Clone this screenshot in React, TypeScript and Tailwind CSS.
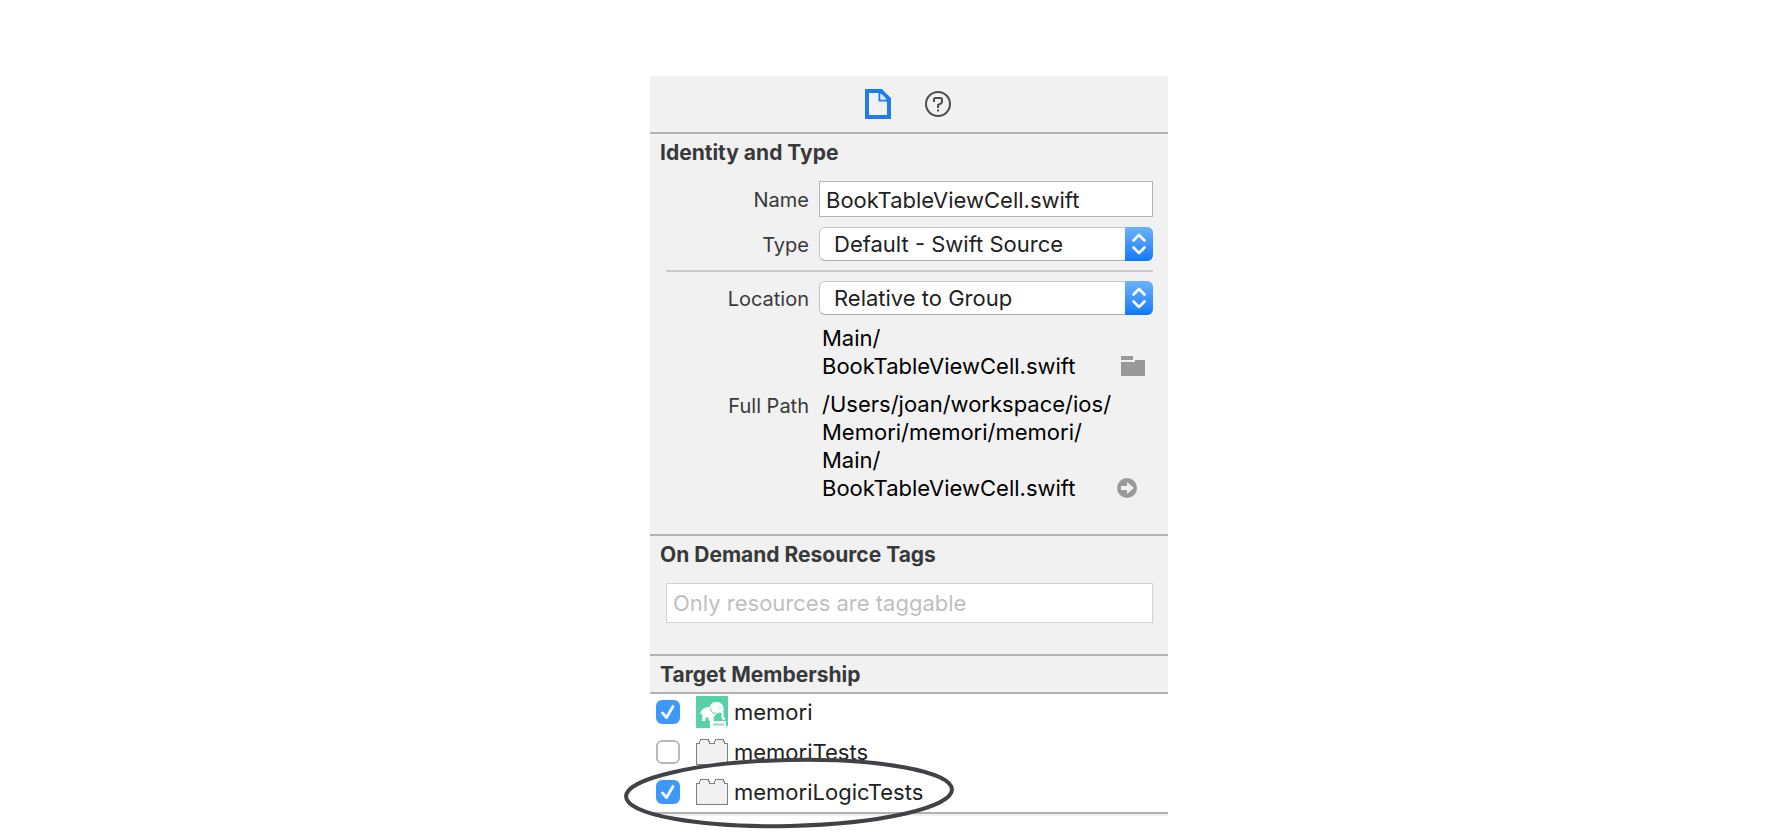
import { ReactNode, useState } from "react";

interface ITarget {
    id: string;
    title: string;
    kind: "app" | "bundle";
    checked: boolean;
}

const TARGETS: ITarget[] = [
    { id: "memori", title: "memori", kind: "app", checked: true },
    { id: "memori-tests", title: "memoriTests", kind: "bundle", checked: false },
    { id: "memori-logic-tests", title: "memoriLogicTests", kind: "bundle", checked: true },
];

const FileIcon = () => (
    <svg width="26" height="30" viewBox="0 0 26 30" fill="none">
        <path d="M2 2H16L24 10V28H2Z" stroke="#1f7ceb" strokeWidth="4" />
        <path d="M14.5 4V11.5H22" stroke="#1f7ceb" strokeWidth="2" />
        <path d="M15.5 5.5H17L20.5 9V10.5H15.5Z" fill="#d9e8fa" />
    </svg>
);

const HelpIcon = () => (
    <svg width="26" height="26" viewBox="0 0 26 26" fill="none" stroke="#4d4d4d" strokeWidth="2">
        <circle cx="13" cy="13" r="12" />
        <path d="M9 11V8L10 7H16L17 8V11L16 12.5L13 14V17" />
        <path d="M13 18.5V20.5" />
    </svg>
);

const FolderIcon = () => (
    <svg width="24" height="20" viewBox="0 0 24 20" fill="#999999">
        <path d="M0 0H12V4H0ZM0 6H14V4H24V20H0Z" />
    </svg>
);

const RevealIcon = () => (
    <svg width="20" height="20" viewBox="0 0 20 20">
        <circle cx="10" cy="10" r="10" fill="#999999" />
        <path d="M4 8H10V4L17 10L10 16V12H4Z" fill="#f1f1f1" />
    </svg>
);

const ElephantIcon = () => (
    <svg width="32" height="32" viewBox="0 0 32 32">
        <rect width="32" height="32" fill="#58d1a9" />
        <path d="M4 18.5C5 13.5 8 11 14 11C14 8 17 6 20.5 6C25 6 27.5 9 27.5 13V20C27.5 22.5 29 22.5 29.5 21.5C30 24.5 25.8 25 25.6 21.5L25.5 17L23 16.5C20.5 17.5 18.5 19 18 21L17.5 25H13L12 21L9.5 22V25H6L6.5 19L5.5 17.5Z" fill="#ffffff" />
        <path d="M14.5 11.5C14.5 15 16 17 18.5 17.5L20.5 16" fill="none" stroke="#58d1a9" />
        <circle cx="24" cy="11.5" r="0.7" fill="#58d1a9" />
        <rect x="14" y="25" width="16" height="7" rx="1" fill="#ffffff" />
        <path d="M17 28.5H28" stroke="#8fdcc3" strokeWidth="2" />
        <circle cx="31" cy="31" r="1" fill="#ffffff" />
    </svg>
);

const BundleIcon = () => (
    <svg width="32" height="28" viewBox="0 0 32 28" shapeRendering="crispEdges">
        <path d="M0.5 5.5H3.5L4.5 1.5H12.5L13.5 5.5H18.5L19.5 1.5H27.5L28.5 5.5H31.5V26.5H0.5Z" fill="#f1f1f1" stroke="#808080" />
    </svg>
);

const Section = ({ title, children }: { title: string; children?: ReactNode }) => (
    <section className="border-t-2 border-[#b2b2b2]">
        <h2 className="px-[10px] pt-1 text-[21px] leading-[30px] font-bold text-[#38393b]">{title}</h2>
        {children}
    </section>
);

const PopUp = ({ id, option }: { id: string; option: string }) => (
    <div className="relative h-[34px] flex-1">
        <select
            id={id}
            className="h-full w-full appearance-none rounded-[6px] border border-[#c4c4c4] border-b-[#ababab] bg-white pl-[14px] text-[22px] leading-[30px] text-[#222222]"
        >
            <option>{option}</option>
        </select>
        <span className="pointer-events-none absolute inset-y-0 right-0 flex w-[28px] items-center justify-center rounded-r-[6px] bg-linear-to-b from-[#6ab2fb] to-[#0a78fe]">
            <svg width="14" height="22" viewBox="0 0 14 22" fill="none" stroke="#ffffff" strokeWidth="2.6" strokeLinecap="round" strokeLinejoin="round">
                <path d="M1.5 7.5L7 2L12.5 7.5M1.5 14.5L7 20L12.5 14.5" />
            </svg>
        </span>
    </div>
);

const label = "w-[153px] shrink-0 pt-[2px] text-right text-[20px] text-[#38393b]";

export default function App() {
    const [targets, setTargets] = useState(TARGETS);

    const toggle = (id: string) => {
        setTargets(targets.map(el => (el.id === id ? { ...el, checked: !el.checked } : el)));
    };

    return (
        <main className="flex min-h-screen items-start justify-center bg-white pt-[76px] pl-[30px] font-['Inter',sans-serif]">
            <div className="w-full max-w-[518px] bg-[#f1f1f1] pb-[2px]">
                <div className="flex h-[56px] items-center justify-center gap-[34px] pr-[2px]">
                    <button aria-label="File inspector"><FileIcon /></button>
                    <button aria-label="Quick help"><HelpIcon /></button>
                </div>

                <Section title="Identity and Type">
                    <div className="flex flex-col pt-[13px] pr-[15px] pb-8 pl-[6px]">
                        <div className="flex items-center gap-[10px]">
                            <label htmlFor="name" className={label}>Name</label>
                            <input id="name" defaultValue="BookTableViewCell.swift" className="h-[36px] min-w-0 flex-1 border border-[#b4b4b4] bg-white px-[6px] pt-[2px] text-[22px] text-[#222222]" />
                        </div>
                        <div className="mt-[10px] flex items-center gap-[10px]">
                            <label htmlFor="type" className={label}>Type</label>
                            <PopUp id="type" option="Default - Swift Source" />
                        </div>
                        <hr className="mt-[9px] ml-[10px] border-t-2 border-[#cbcbcb]" />
                        <div className="mt-[9px] flex items-center gap-[10px]">
                            <label htmlFor="location" className={label}>Location</label>
                            <PopUp id="location" option="Relative to Group" />
                        </div>
                        <div className="mt-[9px] flex items-end justify-between pr-2 pl-[166px]">
                            <p className="text-[22px] leading-[28px] text-black">Main/<br />BookTableViewCell.swift</p>
                            <button aria-label="Choose location" className="pb-1"><FolderIcon /></button>
                        </div>
                        <div className="mt-[10px] flex gap-[13px] pr-4">
                            <span className={`${label} leading-[28px]`}>Full Path</span>
                            <p className="min-w-0 flex-1 text-[22px] leading-[28px] whitespace-nowrap text-black">/Users/joan/workspace/ios/<br />Memori/memori/memori/<br />Main/<br />BookTableViewCell.swift</p>
                            <button aria-label="Reveal in Finder" className="-ml-[13px] self-end pb-1"><RevealIcon /></button>
                        </div>
                    </div>
                </Section>

                <Section title="On Demand Resource Tags">
                    <div className="pt-[13px] pr-[15px] pb-[31px] pl-4">
                        <input aria-label="On Demand Resource Tags" placeholder="Only resources are taggable" className="h-[40px] w-full border border-[#d2d2d2] bg-white px-[6px] text-[22px] placeholder:text-[#bfbfbf]" />
                    </div>
                </Section>

                <Section title="Target Membership" />

                <div className="relative mt-[2px] flex flex-col gap-2 border-y-2 border-[#b2b2b2] bg-white pt-[2px] pb-1">
                    {targets.map(target => (
                        <label key={target.id} className="flex h-8 items-center pl-[6px] text-[22px] text-[#222222]">
                            <span className="relative h-6 w-6">
                                <input
                                    type="checkbox"
                                    checked={target.checked}
                                    onChange={() => toggle(target.id)}
                                    className="block h-6 w-6 appearance-none rounded-[6px] border-2 border-[#b8b8b8] bg-white checked:border-[#3b99fc] checked:bg-[#3b99fc]"
                                />
                                {target.checked && (
                                    <svg className="pointer-events-none absolute inset-0" width="24" height="24" viewBox="0 0 24 24" fill="none" stroke="#ffffff" strokeWidth="2.8" strokeLinecap="round" strokeLinejoin="round">
                                        <path d="M6.5 13L10.5 17.5L17 6.5" />
                                    </svg>
                                )}
                            </span>
                            <span className="mr-[6px] ml-4">{target.kind === "app" ? <ElephantIcon /> : <BundleIcon />}</span>
                            {target.title}
                        </label>
                    ))}
                    {/* hand-drawn ring around the last target */}
                    <svg className="pointer-events-none absolute -bottom-[18px] -left-[28px]" width="334" height="74" viewBox="0 0 334 74" fill="none">
                        <ellipse cx="167" cy="37" rx="163" ry="33" transform="rotate(-1.25 167 37)" stroke="#414246" strokeWidth="4" />
                    </svg>
                </div>
            </div>
        </main>
    );
}
